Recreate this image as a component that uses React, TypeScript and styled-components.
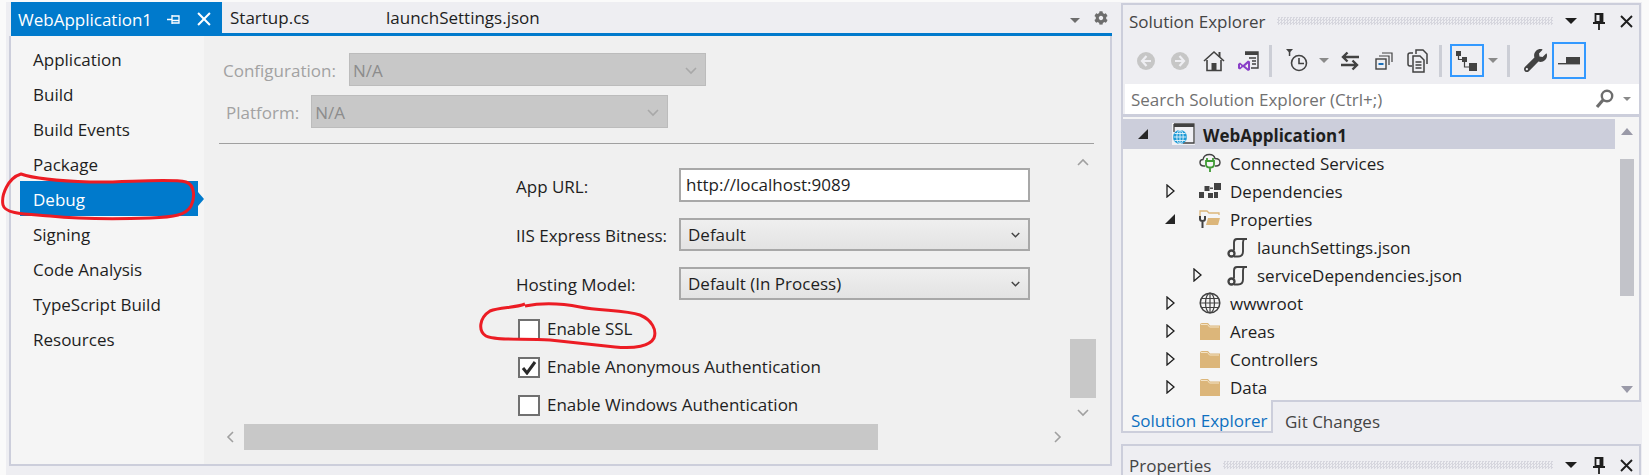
import React from "react";
import styled, { createGlobalStyle } from "styled-components";
import { FaCog, FaWrench } from "react-icons/fa";

const GlobalStyle = createGlobalStyle`
  html, body {
    margin: 0;
    padding: 0;
    background: #fafafa;
  }
  body {
    font-family: "Open Sans", "Noto Sans", "Liberation Sans", sans-serif;
    font-size: 17px;
    color: #1e1e1e;
  }
`;

const NAV_ITEMS = [
  "Application",
  "Build",
  "Build Events",
  "Package",
  "Debug",
  "Signing",
  "Code Analysis",
  "TypeScript Build",
  "Resources",
];

const Chevron = ({ dir, color = "#a0a0a0", size = 12, weight = 1.6 }: { dir: "up" | "down" | "left" | "right"; color?: string; size?: number; weight?: number }) => {
  const points = {
    up: "1,8 6,3 11,8",
    down: "1,4 6,9 11,4",
    left: "8,1 3,6 8,11",
    right: "4,1 9,6 4,11",
  };
  return (
    <svg width={size} height={size} viewBox="0 0 12 12">
      <polyline points={points[dir]} fill="none" stroke={color} strokeWidth={weight} />
    </svg>
  );
};

const CircleArrow = ({ flip }: { flip?: boolean }) => (
  <svg width="18" height="18" viewBox="0 0 18 18" style={flip ? { transform: "scaleX(-1)" } : undefined}>
    <circle cx="9" cy="9" r="9" fill="#c6c6c6" />
    <path d="M9.5 4 L5 9 L9.5 14 M5.5 9 H14" fill="none" stroke="#eeeef2" strokeWidth="2.2" />
  </svg>
);

const HomeIcon = () => (
  <svg width="22" height="22" viewBox="0 0 22 22">
    <path d="M1 11 L11 2 L21 11" fill="none" stroke="#424242" strokeWidth="1.6" />
    <path d="M4 10 V20.5 H18 V10" fill="none" stroke="#424242" strokeWidth="1.6" />
    <rect x="8.5" y="13" width="5" height="8" fill="#424242" />
    <rect x="15.5" y="2" width="2" height="5" fill="#424242" />
  </svg>
);

const VsIcon = () => (
  <svg width="22" height="22" viewBox="0 0 22 22">
    <path d="M8 2 H21 V18 H14" fill="#eeeef2" stroke="#424242" strokeWidth="1.4" />
    <rect x="8" y="2" width="13" height="3" fill="#424242" />
    <path d="M12 8 H19 M15 11 H19 M15 14 H19" stroke="#424242" strokeWidth="1.4" />
    <path d="M1 14 L3 12.5 L6 15 L11 10.5 L13 11.5 V20 L11 21 L6 17 L3 19.5 L1 18.5 Z M3 14.5 V17.5 L4.5 16 Z M11 13.5 L8 16 L11 18.5 Z" fill="#8a3fc8" fillRule="evenodd" />
  </svg>
);

const HistoryIcon = () => (
  <svg width="26" height="24" viewBox="0 0 26 24">
    <path d="M0 0 H7 L3.5 4 Z" fill="#424242" />
    <rect x="2.8" y="3" width="1.5" height="4" fill="#424242" />
    <circle cx="13" cy="14" r="7.5" fill="none" stroke="#424242" strokeWidth="1.6" />
    <path d="M13 9 V14.5 H18" fill="none" stroke="#424242" strokeWidth="1.6" />
  </svg>
);

const SyncIcon = () => (
  <svg width="20" height="20" viewBox="0 0 20 20">
    <path d="M19 6 H3 M7.5 1.5 L3 6 L7.5 10.5" fill="none" stroke="#424242" strokeWidth="2.4" />
    <path d="M1 14 H17 M12.5 9.5 L17 14 L12.5 18.5" fill="none" stroke="#424242" strokeWidth="2.4" />
  </svg>
);

const CollapseIcon = () => (
  <svg width="18" height="18" viewBox="0 0 18 18">
    <path d="M7 1 H17 V10 M4 4 H14 V13" fill="none" stroke="#424242" strokeWidth="1.2" />
    <rect x="1" y="7" width="10" height="10" fill="#eeeef2" stroke="#424242" strokeWidth="1.4" />
    <rect x="3.5" y="11" width="5" height="2" fill="#1c6fb8" />
  </svg>
);

const CopyIcon = () => (
  <svg width="22" height="24" viewBox="0 0 22 24">
    <path d="M6 4 H3 Q1 4 1 6 V15 Q1 17 3 17 H5" fill="none" stroke="#424242" strokeWidth="1.5" />
    <path d="M9 5 V1 H16 L20 5 V15" fill="none" stroke="#424242" strokeWidth="1.5" />
    <path d="M6 7 H13 L17 11 V23 H6 Z" fill="#eeeef2" stroke="#424242" strokeWidth="1.5" />
    <path d="M8.5 13 H14.5 M8.5 16 H14.5 M8.5 19 H14.5" stroke="#424242" strokeWidth="1.3" />
  </svg>
);

const TreeToggleIcon = () => (
  <svg width="22" height="20" viewBox="0 0 22 20">
    <rect x="0" y="0" width="5" height="5" fill="#424242" />
    <rect x="6" y="6" width="5" height="5" fill="#424242" />
    <rect x="13" y="12" width="8" height="8" fill="#424242" />
    <path d="M2.5 5 V8.5 H6 M8.5 11 V16 H13" fill="none" stroke="#424242" strokeWidth="1.2" />
  </svg>
);

const SplitIcon = () => (
  <svg width="22" height="8" viewBox="0 0 22 8">
    <rect x="8" y="0" width="14" height="6" fill="#424242" />
    <rect x="0" y="6" width="22" height="1.4" fill="#424242" />
  </svg>
);

const PinIcon = ({ color = "#1e1e1e" }: { color?: string }) => (
  <svg width="12" height="17" viewBox="0 0 12 17">
    <path d="M2.5 1 H9.5 V9 H2.5 Z" fill="none" stroke={color} strokeWidth="1.8" />
    <rect x="6.5" y="1" width="3" height="8" fill={color} />
    <path d="M0 10 H12 M6 10 V17" stroke={color} strokeWidth="1.8" />
  </svg>
);

const TabPinIcon = () => (
  <svg width="13" height="11" viewBox="0 0 13 11">
    <path d="M5 1 V10 M0 5.5 H5 M5 2 H12 V9 H5 M5 6.5 H12" fill="none" stroke="#fff" strokeWidth="1.3" />
  </svg>
);

const CloseIcon = ({ color = "#1e1e1e", size = 13 }: { color?: string; size?: number }) => (
  <svg width={size} height={size} viewBox="0 0 13 13">
    <path d="M1 1 L12 12 M12 1 L1 12" stroke={color} strokeWidth="1.9" />
  </svg>
);

const SearchIcon = () => (
  <svg width="19" height="20" viewBox="0 0 19 20">
    <circle cx="12" cy="7" r="5.2" fill="none" stroke="#6d6d6d" strokeWidth="2.4" />
    <path d="M8 11 L2 18" stroke="#6d6d6d" strokeWidth="3.2" />
  </svg>
);

const ProjectIcon = () => (
  <svg width="23" height="22" viewBox="0 0 23 22">
    <rect x="0" y="0" width="23" height="22" fill="#f0f0f4" />
    <path d="M2 1 H22 V20 H11" fill="none" stroke="#424242" strokeWidth="1.3" />
    <rect x="2" y="1" width="20" height="3" fill="#424242" />
    <path d="M2 1 V9" stroke="#424242" strokeWidth="1.3" />
    <circle cx="8" cy="14" r="7" fill="#1f9ad6" />
    <path d="M1.5 14 H14.5 M2.5 10.5 H13.5 M2.5 17.5 H13.5 M8 7 V21" stroke="#e6f4fb" strokeWidth="0.9" />
    <ellipse cx="8" cy="14" rx="3.2" ry="7" fill="none" stroke="#e6f4fb" strokeWidth="0.9" />
  </svg>
);

const ConnectedIcon = () => (
  <svg width="22" height="20" viewBox="0 0 22 20">
    <path d="M6 13 H5 C2 13 1 11 1 9.5 C1 7.5 2.5 6.5 4 6.5 C4.5 3.5 7 1.5 10.5 1.5 C13.5 1.5 15.5 3.5 16 5.5 C19 5.5 21 7 21 9.5 C21 12 19 13 17 13 H16" fill="none" stroke="#424242" strokeWidth="1.4" />
    <path d="M8 5 V8 M14 5 V8 M7 8 H15 V11.5 C15 13.5 13 14.5 11 14.5 C9 14.5 7 13.5 7 11.5 Z M11 14.5 V19" fill="none" stroke="#3f9b34" strokeWidth="1.8" />
  </svg>
);

const DependenciesIcon = () => (
  <svg width="22" height="16" viewBox="0 0 22 16">
    <rect x="0" y="9" width="5" height="6" fill="#424242" />
    <rect x="5.5" y="3" width="5" height="5" fill="#424242" />
    <rect x="9" y="10" width="5" height="5" fill="#424242" />
    <rect x="15" y="0" width="7" height="7" fill="#424242" />
    <rect x="15" y="9" width="4" height="6" fill="#424242" />
    <rect x="11" y="4.5" width="3" height="1.4" fill="#424242" />
  </svg>
);

const FolderIcon = () => (
  <svg width="20" height="17" viewBox="0 0 20 17">
    <path d="M0 2 Q0 0 2 0 H8 L10 2.5 H20 V17 H0 Z" fill="#dcb67a" />
    <path d="M1 1.5 H7.5 L9.5 4 H19" fill="none" stroke="#f3e3c6" strokeWidth="1" />
  </svg>
);

const PropertiesIcon = () => (
  <svg width="22" height="20" viewBox="0 0 22 20">
    <path d="M1 8 V2 H8 L10 4 H20 V6" fill="none" stroke="#dcb67a" strokeWidth="1.3" />
    <path d="M9 9 H21 L19 16 H7 Z" fill="#dcb67a" />
    <path d="M1 7 V10 Q1 12 3.5 12 Q6 12 6 10 V7 M3.5 12 V19" fill="none" stroke="#424242" strokeWidth="2" />
  </svg>
);

const JsonIcon = () => (
  <svg width="21" height="21" viewBox="0 0 21 21">
    <path d="M20 2 H10 C8 2 7 3.5 7 5.5 V13.5 M17.5 2 C16.5 2.5 16 3.5 16 5.5 V14.5 C16 18 14 19.5 11 19.5 H7" fill="none" stroke="#424242" strokeWidth="1.9" />
    <circle cx="4.5" cy="16.5" r="3" fill="none" stroke="#424242" strokeWidth="2.3" />
  </svg>
);

const GlobeIcon = () => (
  <svg width="22" height="22" viewBox="0 0 22 22">
    <circle cx="11" cy="11" r="9.8" fill="none" stroke="#424242" strokeWidth="1.5" />
    <ellipse cx="11" cy="11" rx="4.5" ry="9.8" fill="none" stroke="#424242" strokeWidth="1.2" />
    <path d="M1.5 11 H20.5 M3 6.5 H19 M3 15.5 H19 M11 1 V21" stroke="#424242" strokeWidth="1.2" />
  </svg>
);

const Expander = ({ state }: { state?: "open" | "closed" }) => (
  <ExpanderSlot>
    {state === "closed" && (
      <svg width="9" height="14" viewBox="0 0 9 14">
        <path d="M1 1 L8 7 L1 13 Z" fill="none" stroke="#1e1e1e" strokeWidth="1.3" />
      </svg>
    )}
    {state === "open" && (
      <svg width="10" height="10" viewBox="0 0 10 10">
        <path d="M10 0 V10 H0 Z" fill="#262626" />
      </svg>
    )}
  </ExpanderSlot>
);

const PanelTitleBar = ({ title, lift }: { title: string; lift: number }) => (
  <TitleBar $lift={lift}>
    <PanelTitle>{title}</PanelTitle>
    <Grip />
    <TitleButton $w={28}>
      <Caret $size={6} $color="#1e1e1e" />
    </TitleButton>
    <TitleButton $w={28}>
      <PinIcon />
    </TitleButton>
    <TitleButton $w={26}>
      <CloseIcon />
    </TitleButton>
  </TitleBar>
);

const TREE = [
  { level: 0, state: "open", icon: <ProjectIcon />, label: "WebApplication1", selected: true },
  { level: 1, icon: <ConnectedIcon />, label: "Connected Services" },
  { level: 1, state: "closed", icon: <DependenciesIcon />, label: "Dependencies" },
  { level: 1, state: "open", icon: <PropertiesIcon />, label: "Properties" },
  { level: 2, icon: <JsonIcon />, label: "launchSettings.json" },
  { level: 2, state: "closed", icon: <JsonIcon />, label: "serviceDependencies.json" },
  { level: 1, state: "closed", icon: <GlobeIcon />, label: "wwwroot" },
  { level: 1, state: "closed", icon: <FolderIcon />, label: "Areas" },
  { level: 1, state: "closed", icon: <FolderIcon />, label: "Controllers" },
  { level: 1, state: "closed", icon: <FolderIcon />, label: "Data" },
] as const;

export default function App() {
  return (
    <>
      <GlobalStyle />
      <Page>
        <DocWell>
          <TabStrip>
            <ActiveTab>
              <span>WebApplication1</span>
              <TabPinIcon />
              <CloseIcon color="#fff" size={14} />
            </ActiveTab>
            <DocTab $w={156}>Startup.cs</DocTab>
            <DocTab $w={160}>launchSettings.json</DocTab>
            <TabStripEnd>
              <TabMenuCaret>
                <Caret $size={5} $color="#6d6d6d" />
              </TabMenuCaret>
              <FaCog size={14} color="#6d6d6d" />
            </TabStripEnd>
          </TabStrip>
          <DocBody>
            <Sidebar>
              {NAV_ITEMS.map((item) => (
                <NavItem key={item} $active={item === "Debug"}>
                  {item}
                </NavItem>
              ))}
            </Sidebar>
            <Main>
              <TopRow $indent={19} $gap={13}>
                <DisabledLabel>Configuration:</DisabledLabel>
                <DisabledSelect>
                  <span>N/A</span>
                  <Chevron dir="down" color="#a8a8a8" />
                </DisabledSelect>
              </TopRow>
              <TopRow $indent={22} $gap={12} $top={9}>
                <DisabledLabel>Platform:</DisabledLabel>
                <DisabledSelect>
                  <span>N/A</span>
                  <Chevron dir="down" color="#a8a8a8" />
                </DisabledSelect>
              </TopRow>
              <Divider />
              <ScrollArea>
                <Form>
                  <FormRow>
                    <FormLabel $drop={2}>App URL:</FormLabel>
                    <TextBox>http://localhost:9089</TextBox>
                  </FormRow>
                  <FormRow $top={16}>
                    <FormLabel $drop={1}>IIS Express Bitness:</FormLabel>
                    <SelectBox>
                      Default
                      <Chevron dir="down" color="#444" size={9} weight={2} />
                    </SelectBox>
                  </FormRow>
                  <FormRow $top={16}>
                    <FormLabel $drop={1}>Hosting Model:</FormLabel>
                    <SelectBox>
                      Default (In Process)
                      <Chevron dir="down" color="#444" size={9} weight={2} />
                    </SelectBox>
                  </FormRow>
                  <CheckRow $top={19}>
                    <CheckBox />
                    <CheckText>Enable SSL</CheckText>
                  </CheckRow>
                  <CheckRow $top={17}>
                    <CheckBox>
                      <svg width="16" height="14" viewBox="0 0 16 14">
                        <path d="M2 7 L6 12 L14 1" fill="none" stroke="#2a2a2a" strokeWidth="3" />
                      </svg>
                    </CheckBox>
                    <CheckText>Enable Anonymous Authentication</CheckText>
                  </CheckRow>
                  <CheckRow $top={17}>
                    <CheckBox />
                    <CheckText>Enable Windows Authentication</CheckText>
                  </CheckRow>
                </Form>
                <VScroll>
                  <Chevron dir="up" />
                  <VThumb />
                  <Chevron dir="down" />
                </VScroll>
              </ScrollArea>
              <HScroll>
                <Chevron dir="left" />
                <HThumb />
                <Chevron dir="right" />
              </HScroll>
            </Main>
          </DocBody>
        </DocWell>

        <ToolColumn>
          <ToolPanel>
            <PanelTitleBar title="Solution Explorer" lift={4} />
            <Toolbar>
              <ToolButton><CircleArrow /></ToolButton>
              <ToolButton><CircleArrow flip /></ToolButton>
              <ToolButton><HomeIcon /></ToolButton>
              <ToolButton><VsIcon /></ToolButton>
              <ToolSeparator $ml={4} />
              <ToolButton $ml={10}><HistoryIcon /></ToolButton>
              <ToolButton $w={16}><Caret $size={5} $color="#8a8a8a" /></ToolButton>
              <ToolButton $ml={1}><SyncIcon /></ToolButton>
              <ToolButton><CollapseIcon /></ToolButton>
              <ToolButton><CopyIcon /></ToolButton>
              <ToolSeparator $ml={4} />
              <ToolButton $ml={8} $active><TreeToggleIcon /></ToolButton>
              <ToolButton $w={16} $ml={1}><Caret $size={5} $color="#8a8a8a" /></ToolButton>
              <ToolSeparator $ml={6} />
              <ToolButton $ml={8}><FaWrench size={23} color="#424242" /></ToolButton>
              <ToolButton $active $tall><SplitIcon /></ToolButton>
            </Toolbar>
            <SearchBar>
              <SearchText>Search Solution Explorer (Ctrl+;)</SearchText>
              <SearchIcon />
              <SearchCaret>
                <Caret $size={4} $color="#8a8a8a" />
              </SearchCaret>
            </SearchBar>
            <TreeBody>
              <TreeRows>
                {TREE.map((node) => (
                  <TreeRow key={node.label} $level={node.level} $selected={"selected" in node}>
                    <Expander state={"state" in node ? node.state : undefined} />
                    <TreeIcon>{node.icon}</TreeIcon>
                    <TreeLabel $bold={"selected" in node}>{node.label}</TreeLabel>
                  </TreeRow>
                ))}
              </TreeRows>
              <TreeScroll>
                <ScrollArrow $up />
                <TreeThumb />
                <ScrollArrow />
              </TreeScroll>
            </TreeBody>
          </ToolPanel>
          <BottomTabs>
            <BottomTabActive>Solution Explorer</BottomTabActive>
            <BottomTab>Git Changes</BottomTab>
          </BottomTabs>
          <PropertiesPanel>
            <PanelTitleBar title="Properties" lift={0} />
          </PropertiesPanel>
        </ToolColumn>

        <Scribbles width="1649" height="475" viewBox="0 0 1649 475">
          <path d="M21 174 C35 179 60 181 90 182 C120 183 170 178 186 182 C195 185 195 198 191 206 C186 215 175 217 150 218 C120 219 80 219 50 216 C25 214 5 214 3 205 C1 195 8 178 21 174 Z" />
          <path d="M525 306 C540 303 560 303 580 307 C600 311 625 310 640 315 C652 320 657 330 654 338 C650 346 635 349 615 347 C595 345 570 342 550 340 C525 338 495 341 486 336 C478 331 479 318 490 311 C500 307 515 308 525 304" />
        </Scribbles>
      </Page>
    </>
  );
}

const Page = styled.div`
  position: relative;
  display: flex;
  width: 1649px;
  height: 475px;
  overflow: hidden;
  box-sizing: border-box;
  padding: 2px 0 0 6px;
  background: linear-gradient(#eeeef2, #eeeef2) 6px 2px / 1636px 473px no-repeat #fafafa;
`;

const Scribbles = styled.svg`
  position: absolute;
  top: 0;
  left: 0;
  pointer-events: none;
  fill: none;
  stroke: #ec1c24;
  stroke-width: 3;
`;

const DocWell = styled.div`
  width: 1106px;
  display: flex;
  flex-direction: column;
  flex: none;
`;

const TabStrip = styled.div`
  display: flex;
  height: 34px;
  margin-left: 5px;
  box-sizing: border-box;
  border-bottom: 3px solid #007acc;
  line-height: 31px;
`;

const ActiveTab = styled.div`
  display: flex;
  align-items: center;
  width: 211px;
  height: 34px;
  box-sizing: border-box;
  padding: 0 10px 0 7px;
  background: #007acc;
  color: #fff;
  span {
    width: 149px;
  }
  svg:last-child {
    margin-left: 17px;
  }
`;

const DocTab = styled.div<{ $w: number }>`
  width: ${(p) => p.$w}px;
  padding-left: 8px;
  box-sizing: border-box;
`;

const TabStripEnd = styled.div`
  margin-left: auto;
  display: flex;
  align-items: center;
  gap: 14px;
  padding-right: 4px;
`;

const TabMenuCaret = styled.span`
  margin-top: 6px;
`;

const Caret = styled.span<{ $size: number; $color: string }>`
  display: block;
  width: 0;
  height: 0;
  border-left: ${(p) => p.$size}px solid transparent;
  border-right: ${(p) => p.$size}px solid transparent;
  border-top: ${(p) => p.$size}px solid ${(p) => p.$color};
`;

const DocBody = styled.div`
  display: flex;
  height: 430px;
  margin-left: 3px;
  box-sizing: border-box;
  border: 2px solid #cccedb;
  border-top: none;
`;

const Sidebar = styled.nav`
  width: 193px;
  flex: none;
  padding-top: 5px;
  box-sizing: border-box;
  background: #f5f5f5;
`;

const NavItem = styled.div<{ $active?: boolean }>`
  position: relative;
  width: 178px;
  height: 35px;
  margin-left: 9px;
  padding-left: 13px;
  box-sizing: border-box;
  line-height: 37px;
  background: ${(p) => (p.$active ? "#007acc" : "transparent")};
  color: ${(p) => (p.$active ? "#fff" : "#1e1e1e")};
  ${(p) =>
    p.$active &&
    `&::after {
      content: "";
      position: absolute;
      left: 100%;
      top: 11px;
      border-left: 6px solid #007acc;
      border-top: 7px solid transparent;
      border-bottom: 7px solid transparent;
    }`}
`;

const Main = styled.main`
  flex: 1;
  padding-top: 17px;
  box-sizing: border-box;
  background: #f0f0f0;
`;

const TopRow = styled.div<{ $indent: number; $gap: number; $top?: number }>`
  display: flex;
  align-items: center;
  gap: ${(p) => p.$gap}px;
  margin: ${(p) => p.$top ?? 0}px 0 0 ${(p) => p.$indent}px;
`;

const DisabledLabel = styled.span`
  padding-top: 2px;
  color: #a2a2a2;
`;

const DisabledSelect = styled.div`
  display: flex;
  align-items: center;
  justify-content: space-between;
  width: 357px;
  height: 33px;
  box-sizing: border-box;
  padding: 0 8px 0 3px;
  background: #c8c8c8;
  border: 1px solid #bcbcbc;
  color: #8c8c8c;
  span {
    padding-top: 2px;
  }
`;

const Divider = styled.div`
  height: 1px;
  margin: 15px 16px 0 15px;
  background: #a0a0a0;
`;

const ScrollArea = styled.div`
  display: flex;
  height: 280px;
`;

const Form = styled.div`
  width: 866px;
  flex: none;
  padding: 24px 0 0 312px;
  box-sizing: border-box;
`;

const FormRow = styled.div<{ $top?: number }>`
  display: flex;
  align-items: center;
  margin-top: ${(p) => p.$top ?? 0}px;
`;

const FormLabel = styled.label<{ $drop: number }>`
  width: 163px;
  flex: none;
  padding-top: ${(p) => p.$drop}px;
`;

const TextBox = styled.div`
  width: 351px;
  height: 34px;
  box-sizing: border-box;
  padding-left: 5px;
  line-height: 29px;
  background: #fff;
  border: 2px solid #a8a8a8;
`;

const SelectBox = styled.div`
  display: flex;
  align-items: center;
  justify-content: space-between;
  width: 351px;
  height: 33px;
  box-sizing: border-box;
  padding: 0 8px 0 7px;
  background: linear-gradient(#efefef, #e3e3e3);
  border: 2px solid #a8a8a8;
`;

const CheckRow = styled.div<{ $top: number }>`
  display: flex;
  align-items: center;
  height: 21px;
  margin-top: ${(p) => p.$top}px;
`;

const CheckBox = styled.span`
  display: flex;
  align-items: center;
  justify-content: center;
  width: 22px;
  height: 21px;
  margin: 0 7px 0 2px;
  box-sizing: border-box;
  background: #fff;
  border: 2px solid #707070;
`;

const CheckText = styled.span`
  margin-bottom: 2px;
`;

const VScroll = styled.div`
  width: 26px;
  display: flex;
  flex-direction: column;
  align-items: center;
  padding-top: 13px;
`;

const VThumb = styled.div`
  width: 26px;
  height: 59px;
  margin: 170px 0 8px;
  background: #c8c8c8;
`;

const HScroll = styled.div`
  display: flex;
  align-items: center;
  height: 26px;
  padding-left: 21px;
`;

const HThumb = styled.div`
  width: 634px;
  height: 26px;
  margin: 0 173px 0 7px;
  background: #c8c8c8;
`;

const ToolColumn = styled.div`
  width: 520px;
  flex: none;
  margin: 1px 0 0 9px;
  display: flex;
  flex-direction: column;
`;

const ToolPanel = styled.section`
  height: 402px;
  box-sizing: border-box;
  border: 2px solid #cccedb;
`;

const TitleBar = styled.div<{ $lift: number }>`
  display: flex;
  align-items: center;
  height: 36px;
  box-sizing: border-box;
  padding: ${(p) => (p.$lift ? 0 : 2)}px 0 ${(p) => p.$lift}px 6px;
`;

const PanelTitle = styled.span`
  color: #444;
`;

const Grip = styled.div`
  flex: 1;
  height: 8px;
  margin: 0 4px 0 12px;
  background: repeating-conic-gradient(#d6d6de 0 25%, transparent 0 50%) 0 0 / 3px 3px;
`;

const TitleButton = styled.span<{ $w: number }>`
  width: ${(p) => p.$w}px;
  display: flex;
  justify-content: center;
  align-items: center;
`;

const Toolbar = styled.div`
  display: flex;
  align-items: center;
  height: 39px;
  padding-left: 6px;
`;

const ToolButton = styled.span<{ $w?: number; $ml?: number; $active?: boolean; $tall?: boolean }>`
  display: flex;
  align-items: center;
  justify-content: center;
  width: ${(p) => p.$w ?? 34}px;
  height: ${(p) => (p.$tall ? 37 : 33)}px;
  margin-left: ${(p) => p.$ml ?? 0}px;
  box-sizing: border-box;
  border: ${(p) => (p.$active ? "2px solid #3399ff" : "none")};
`;

const ToolSeparator = styled.span<{ $ml: number }>`
  width: 3px;
  height: 32px;
  margin-left: ${(p) => p.$ml}px;
  background: #ccced6;
`;

const SearchBar = styled.div`
  display: flex;
  align-items: center;
  height: 30px;
  margin: 4px 0 0 2px;
  padding: 0 2px 0 6px;
  background: #fff;
`;

const SearchText = styled.span`
  flex: 1;
  color: #717171;
`;

const SearchCaret = styled.span`
  margin-left: 9px;
  width: 14px;
`;

const TreeBody = styled.div`
  display: flex;
  height: 286px;
  border-top: 3px solid #cccedb;
  box-sizing: border-box;
  background: #f5f5f5;
  overflow: hidden;
`;

const TreeRows = styled.div`
  width: 492px;
  flex: none;
  padding-top: 2px;
`;

const TreeRow = styled.div<{ $level: number; $selected: boolean }>`
  display: flex;
  align-items: center;
  height: ${(p) => (p.$selected ? 30 : 28)}px;
  padding-left: ${(p) => 12 + p.$level * 27}px;
  background: ${(p) => (p.$selected ? "#cccedb" : "transparent")};
`;

const ExpanderSlot = styled.span`
  display: flex;
  align-items: center;
  justify-content: center;
  width: 16px;
  flex: none;
`;

const TreeIcon = styled.span`
  display: flex;
  align-items: center;
  justify-content: center;
  width: 28px;
  margin-left: 18px;
  flex: none;
`;

const TreeLabel = styled.span<{ $bold: boolean }>`
  margin-left: 6px;
  padding-top: ${(p) => (p.$bold ? 2 : 0)}px;
  font-weight: ${(p) => (p.$bold ? 700 : 400)};
`;

const TreeScroll = styled.div`
  flex: 1;
  display: flex;
  flex-direction: column;
  align-items: center;
  padding-top: 11px;
`;

const ScrollArrow = styled.span<{ $up?: boolean }>`
  width: 0;
  height: 0;
  border-left: 6px solid transparent;
  border-right: 6px solid transparent;
  ${(p) => (p.$up ? "border-bottom: 7px solid #9a9aa8;" : "border-top: 7px solid #9a9aa8;")}
`;

const TreeThumb = styled.div`
  width: 14px;
  height: 137px;
  margin: 24px 0 90px;
  background: #c2c3c9;
`;

const BottomTabs = styled.div`
  display: flex;
  align-items: stretch;
  height: 33px;
  margin-top: -2px;
  position: relative;
`;

const BottomTabActive = styled.div`
  width: 152px;
  box-sizing: border-box;
  padding: 5px 0 0 8px;
  background: #f5f5f5;
  border: 2px solid #cccedb;
  border-top: none;
  color: #0e70c0;
  line-height: 32px;
`;

const BottomTab = styled.div`
  margin-left: 12px;
  padding-top: 6px;
  color: #444;
  line-height: 32px;
`;

const PropertiesPanel = styled.section`
  margin-top: 11px;
  box-sizing: border-box;
  border: 2px solid #cccedb;
  border-bottom: none;
`;
